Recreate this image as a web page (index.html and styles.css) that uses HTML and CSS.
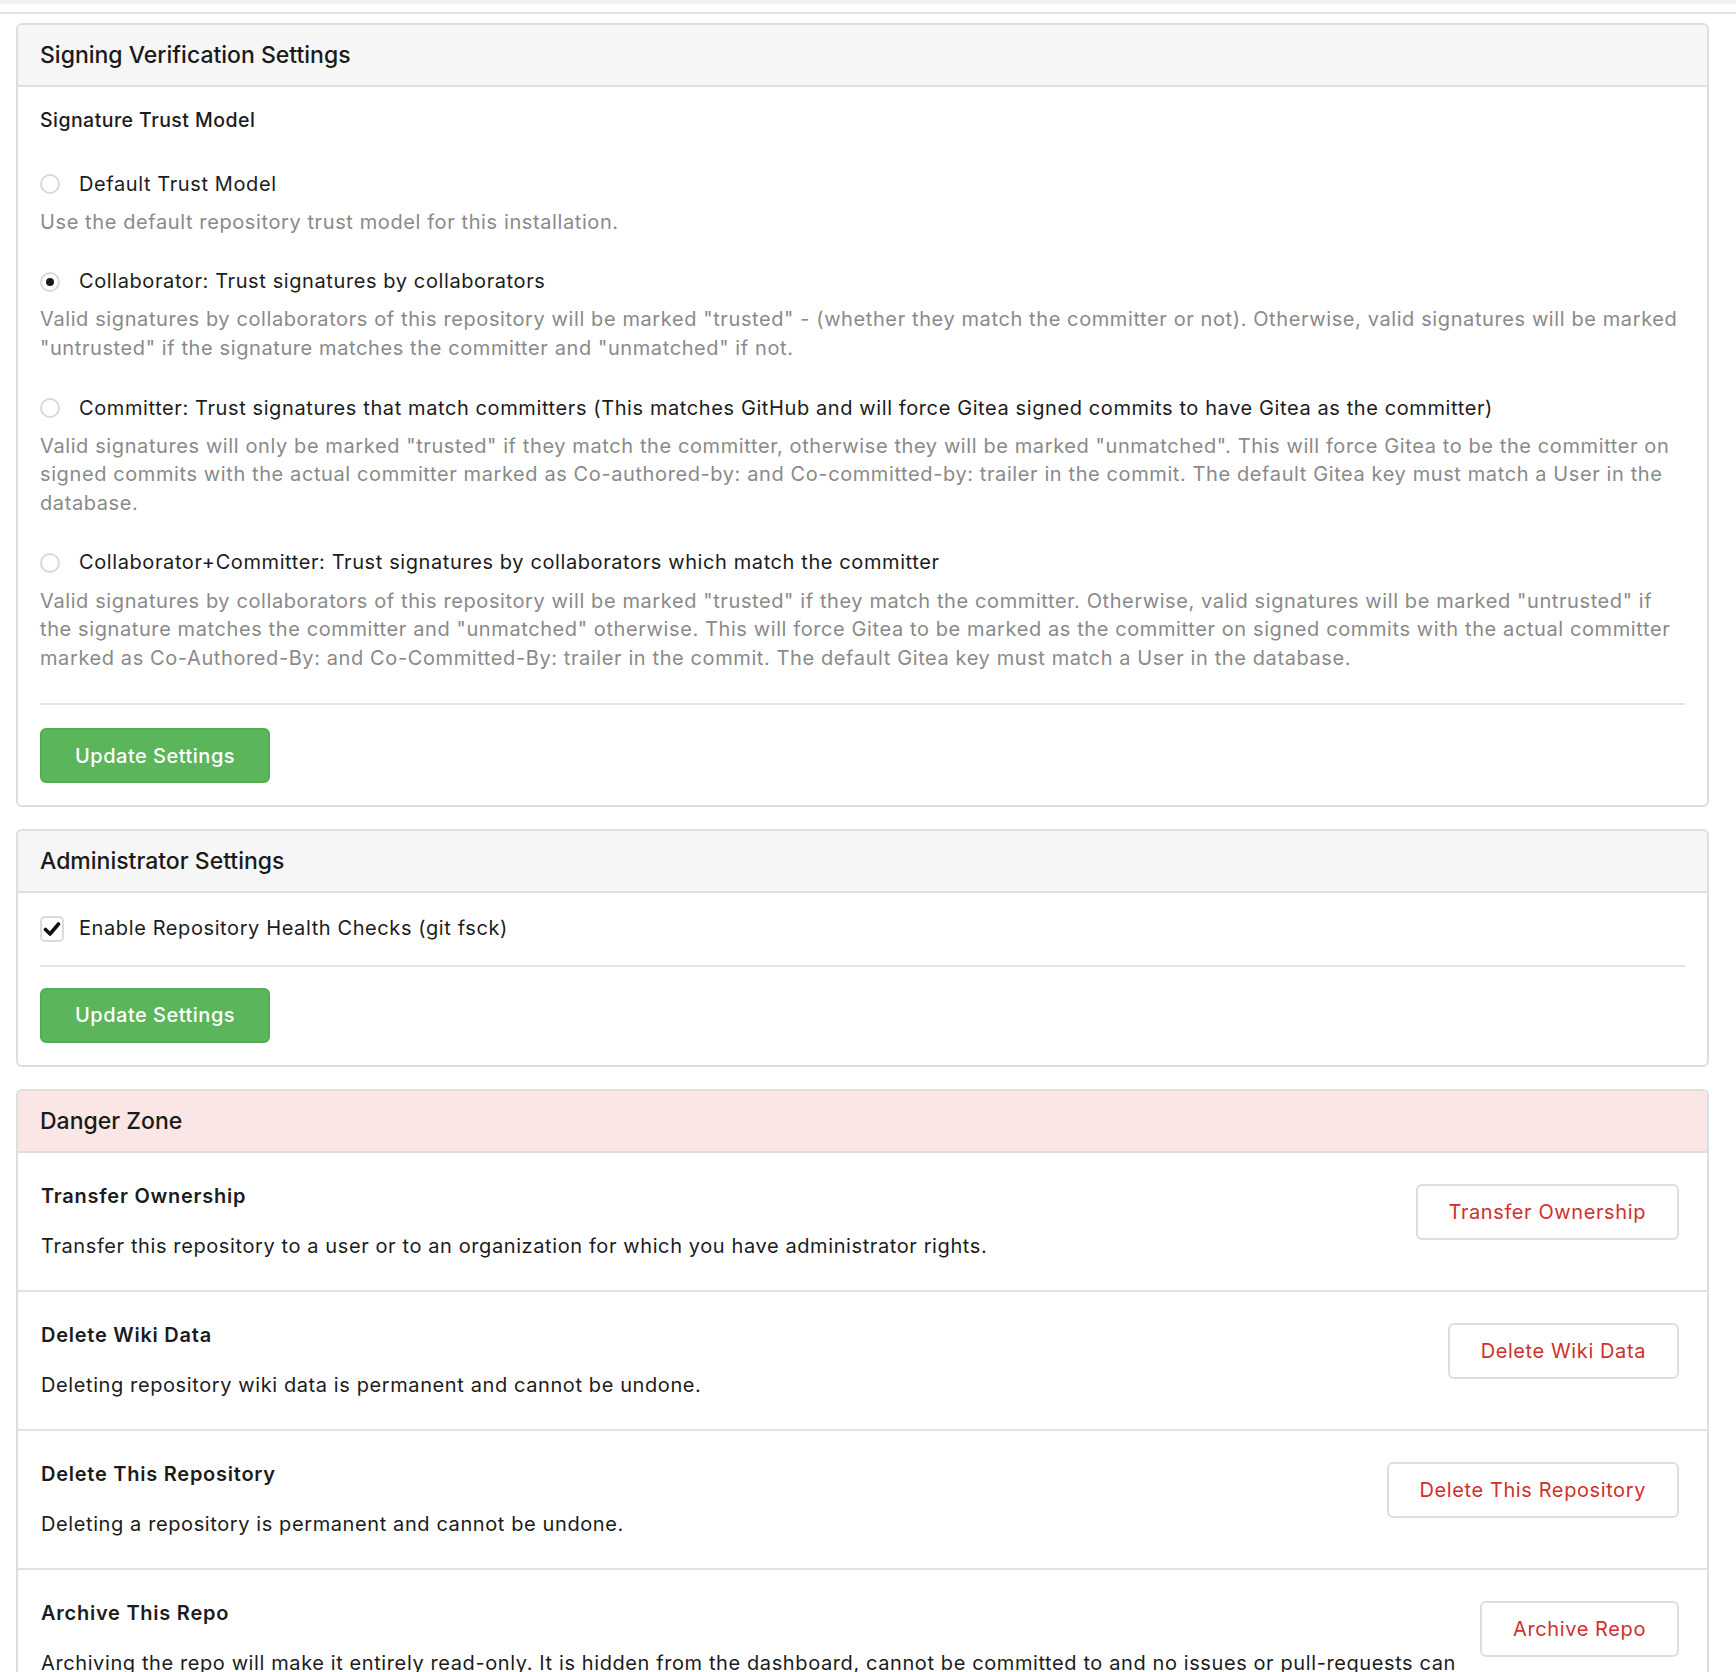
FILE: index.html
```html
<!DOCTYPE html>
<html lang="en">
<head>
    <meta charset="UTF-8">
    <meta name="viewport" content="width=device-width, initial-scale=1.0">
    <title>Repository Settings</title>
    <link rel="stylesheet" href="styles.css">
</head>
<body>
    <div class="tabs-strip"></div>
    <div class="tabs-line"></div>

    <div class="page">
        <!-- signing -->
        <div class="card">
            <div class="card-header">Signing Verification Settings</div>
            <div class="card-body">
                <div class="field-label">Signature Trust Model</div>

                <div class="option">
                    <label class="option-row">
                        <input type="radio" name="trust_model" value="default">
                        <span>Default Trust Model</span>
                    </label>
                    <p class="option-desc">Use the default repository trust model for this installation.</p>
                </div>

                <div class="option">
                    <label class="option-row">
                        <input type="radio" name="trust_model" value="collaborator" checked>
                        <span>Collaborator: Trust signatures by collaborators</span>
                    </label>
                    <p class="option-desc">Valid signatures by collaborators of this repository will be marked "trusted" - (whether they match the committer or not). Otherwise, valid signatures will be marked "untrusted" if the signature matches the committer and "unmatched" if not.</p>
                </div>

                <div class="option">
                    <label class="option-row">
                        <input type="radio" name="trust_model" value="committer">
                        <span>Committer: Trust signatures that match committers (This matches GitHub and will force Gitea signed commits to have Gitea as the committer)</span>
                    </label>
                    <p class="option-desc">Valid signatures will only be marked "trusted" if they match the committer, otherwise they will be marked "unmatched". This will force Gitea to be the committer on signed commits with the actual committer marked as Co-authored-by: and Co-committed-by: trailer in the commit. The default Gitea key must match a User in the database.</p>
                </div>

                <div class="option">
                    <label class="option-row">
                        <input type="radio" name="trust_model" value="collaboratorcommitter">
                        <span>Collaborator+Committer: Trust signatures by collaborators which match the committer</span>
                    </label>
                    <p class="option-desc">Valid signatures by collaborators of this repository will be marked "trusted" if they match the committer. Otherwise, valid signatures will be marked "untrusted" if the signature matches the committer and "unmatched" otherwise. This will force Gitea to be marked as the committer on signed commits with the actual committer marked as Co-Authored-By: and Co-Committed-By: trailer in the commit. The default Gitea key must match a User in the database.</p>
                </div>

                <div class="divider"></div>
                <button class="btn-green">Update Settings</button>
            </div>
        </div>

        <!-- admin -->
        <div class="card">
            <div class="card-header">Administrator Settings</div>
            <div class="card-body">
                <label class="option-row check-row">
                    <span class="checkbox">
                        <svg width="18" height="18" viewBox="0 0 18 18"><path d="M2.5 9.5 L7 14 L15.5 4" fill="none" stroke="#111" stroke-width="3.6" stroke-linecap="round" stroke-linejoin="round"/></svg>
                    </span>
                    <span>Enable Repository Health Checks (git fsck)</span>
                </label>
                <div class="divider"></div>
                <button class="btn-green">Update Settings</button>
            </div>
        </div>

        <!-- danger -->
        <div class="card">
            <div class="card-header danger">Danger Zone</div>
            <div class="danger-item">
                <div class="danger-text">
                    <div class="danger-title">Transfer Ownership</div>
                    <p>Transfer this repository to a user or to an organization for which you have administrator rights.</p>
                </div>
                <button class="btn-red">Transfer Ownership</button>
            </div>
            <div class="danger-item">
                <div class="danger-text">
                    <div class="danger-title">Delete Wiki Data</div>
                    <p>Deleting repository wiki data is permanent and cannot be undone.</p>
                </div>
                <button class="btn-red">Delete Wiki Data</button>
            </div>
            <div class="danger-item">
                <div class="danger-text">
                    <div class="danger-title">Delete This Repository</div>
                    <p>Deleting a repository is permanent and cannot be undone.</p>
                </div>
                <button class="btn-red">Delete This Repository</button>
            </div>
            <div class="danger-item">
                <div class="danger-text">
                    <div class="danger-title">Archive This Repo</div>
                    <p>Archiving the repo will make it entirely read-only. It is hidden from the dashboard, cannot be committed to and no issues or pull-requests can be created.</p>
                </div>
                <button class="btn-red">Archive Repo</button>
            </div>
        </div>
    </div>
</body>
</html>
```
FILE: styles.css
```css
body {
    margin: 0;
    font-family: Inter, "Noto Sans", sans-serif;
    font-size: 20px;
    line-height: 28.6px;
    letter-spacing: 0.6px;
    color: #1c1c1c;
    background: #fff;
}
p {
    margin: 0;
}
.tabs-strip {
    height: 4px;
    background: #f1f1f3;
}
.tabs-line {
    height: 2px;
    margin-top: 8px;
    background: #e2e2e4;
}
.page {
    padding: 9px 27px 0 16px;
}
.card {
    border: 2px solid #dedede;
    border-radius: 6px;
    margin-bottom: 22px;
    background: #fff;
}
.card-header {
    height: 60px;
    display: flex;
    align-items: center;
    padding: 0 22px;
    background: #f6f6f6;
    border-bottom: 2px solid #dedede;
    border-radius: 5px 5px 0 0;
    font-size: 23px;
    font-weight: 500;
    letter-spacing: 0;
    color: #1a1a1a;
}
.card-header.danger {
    background: #fae7e5;
}
.card-body {
    padding: 19px 22px 22px;
}
.field-label {
    font-size: 19.5px;
    font-weight: 500;
    letter-spacing: 0.45px;
    margin-bottom: 35px;
}
.option {
    margin-bottom: 31px;
}
.option:last-of-type {
    margin-bottom: 0;
}
.option-row {
    display: flex;
    align-items: center;
    gap: 19px;
    cursor: pointer;
}
.option-row input[type="radio"] {
    appearance: none;
    margin: 0;
    width: 20px;
    height: 20px;
    flex-shrink: 0;
    border: 2px solid #d9d9d9;
    border-radius: 50%;
    background: #fff;
    display: grid;
    place-items: center;
}
.option-row input[type="radio"]:checked::after {
    content: "";
    width: 8px;
    height: 8px;
    border-radius: 50%;
    background: #1a1a1a;
}
.option-desc {
    margin-top: 9.5px;
    color: #8a8a8a;
}
.check-row {
    gap: 15px;
    margin-top: 2px;
}
.checkbox {
    width: 24px;
    height: 26px;
    box-sizing: border-box;
    border: 2px solid #dadada;
    border-radius: 5px;
    display: grid;
    place-items: center;
    flex-shrink: 0;
}
.divider {
    height: 2px;
    background: #e4e4e4;
    margin: 31px 0 23px;
}
.check-row + .divider {
    margin: 22px 0 21px;
}
.btn-green {
    height: 55px;
    padding: 0 33px;
    font-family: inherit;
    font-size: 20px;
    font-weight: 500;
    letter-spacing: 0.5px;
    color: #fff;
    background: #5bb55b;
    border: 2px solid #52ac52;
    border-radius: 6px;
    cursor: pointer;
}
.danger-item {
    display: flex;
    align-items: flex-start;
    gap: 14px;
    padding: 29px 28px 30px 23px;
    border-bottom: 2px solid #e2e2e2;
}
.danger-item:last-child {
    border-bottom: none;
}
.danger-text {
    flex: 1;
}
.danger-title {
    font-weight: 600;
    letter-spacing: 0.75px;
}
.danger-text p {
    margin-top: 21px;
}
.btn-red {
    flex-shrink: 0;
    margin-top: 2px;
    height: 56px;
    padding: 0 31px;
    font-family: inherit;
    font-size: 20px;
    letter-spacing: 0.6px;
    color: #d0302c;
    background: #fff;
    border: 2px solid #dedede;
    border-radius: 6px;
    cursor: pointer;
}
```
